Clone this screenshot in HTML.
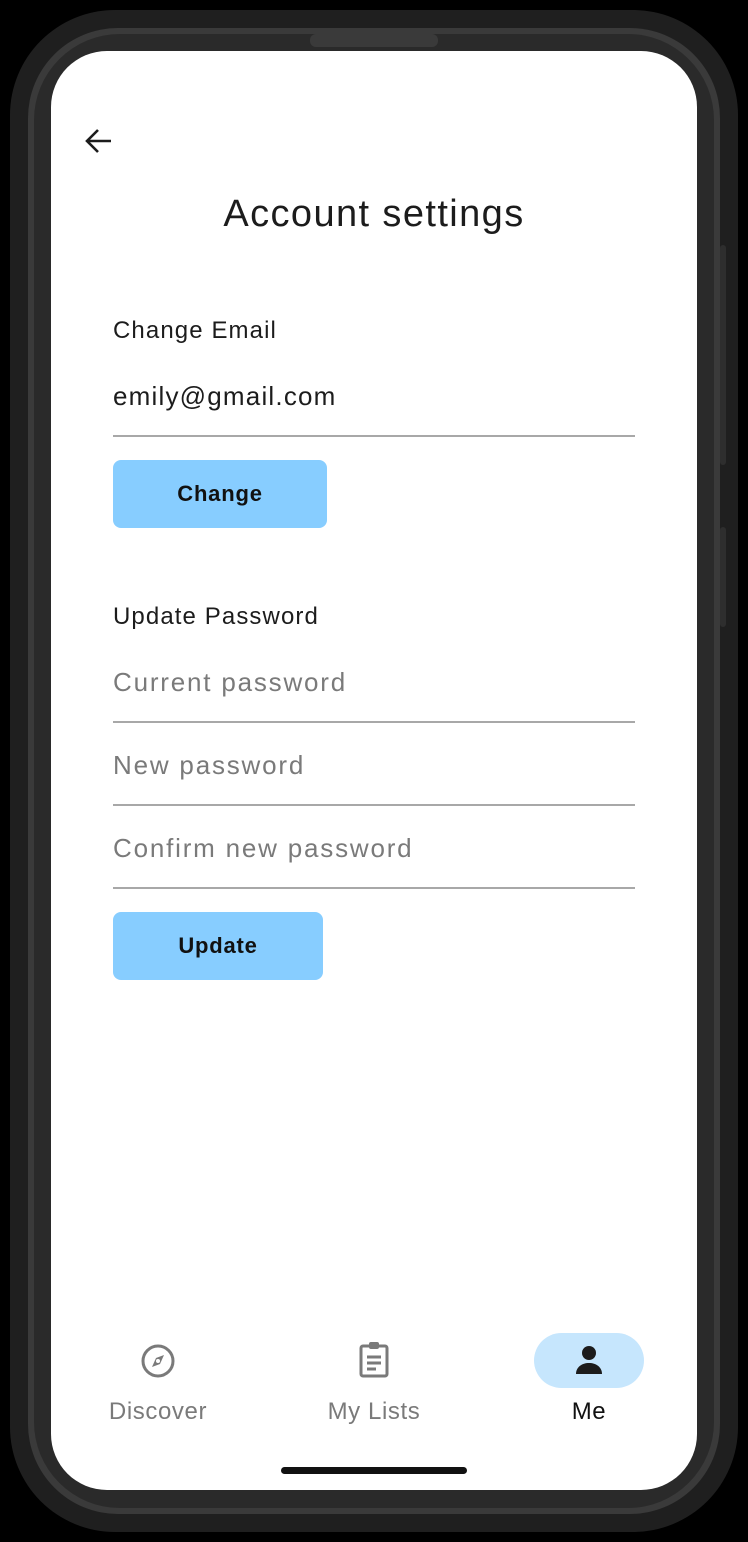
<!DOCTYPE html>
<html><head><meta charset="utf-8"><style>
*{margin:0;padding:0;box-sizing:border-box}
body{width:748px;height:1542px;background:#000;position:relative;overflow:hidden;font-family:"Liberation Sans",sans-serif}
.body{position:absolute;left:10px;top:10px;width:728px;height:1522px;border-radius:105px;background:#1f1f1f}
.ring{position:absolute;left:28px;top:28px;width:692px;height:1486px;border-radius:90px;background:#3a3a3a}
.ring2{position:absolute;left:34px;top:34px;width:680px;height:1474px;border-radius:86px;background:#2a2a2a}
.spk{position:absolute;left:310px;top:34px;width:128px;height:13px;border-radius:6px;background:#3a3a3a}
.btn-side{position:absolute;right:22px;width:6px;background:#2e2e2e;border-radius:3px}
.screen{position:absolute;left:51px;top:51px;width:646px;height:1439px;border-radius:56px;background:#fff;overflow:hidden}
.t{position:absolute;color:#1c1c1c;white-space:nowrap}
.lbl{font-size:24px;letter-spacing:1.1px}
.line{position:absolute;left:62px;width:522px;height:2px;background:#a8a8a8}
.b{position:absolute;left:62px;height:68px;border-radius:8px;background:#87cdff;font-weight:bold;font-size:22px;letter-spacing:0.8px;color:#111;text-align:center;line-height:68px}
.ph{color:#7a7a7a;font-size:26px;letter-spacing:1.8px}
.nav{position:absolute;font-size:24px;letter-spacing:0.6px;color:#7a7a7a;text-align:center;width:160px}
</style></head><body>
<div class="body"></div>
<div class="ring"></div>
<div class="ring2"></div>
<div class="spk"></div>
<div class="btn-side" style="top:245px;height:220px"></div>
<div class="btn-side" style="top:527px;height:100px"></div>
<div class="screen">
<svg style="position:absolute;left:32px;top:75px" width="32" height="30" viewBox="0 0 32 30"><path d="M28 15H5M15 4L4 15l11 11" fill="none" stroke="#1c1c1c" stroke-width="2.6"/></svg>
<div class="t" style="left:0;width:646px;text-align:center;top:142px;font-size:38px;letter-spacing:1.4px">Account settings</div>
<div class="t lbl" style="left:62px;top:266px">Change Email</div>
<div class="t" style="left:62px;top:330px;font-size:26px;letter-spacing:1.2px">emily@gmail.com</div>
<div class="line" style="top:384px"></div>
<div class="b" style="top:409px;width:214px">Change</div>
<div class="t lbl" style="left:62px;top:552px">Update Password</div>
<div class="t ph" style="left:62px;top:616px">Current password</div>
<div class="line" style="top:670px"></div>
<div class="t ph" style="left:62px;top:699px">New password</div>
<div class="line" style="top:753px"></div>
<div class="t ph" style="left:62px;top:782px">Confirm new password</div>
<div class="line" style="top:836px"></div>
<div class="b" style="top:861px;width:210px">Update</div>
<svg style="position:absolute;left:89px;top:1292px" width="36" height="36" viewBox="0 0 36 36"><circle cx="18" cy="18" r="15" fill="none" stroke="#7a7a7a" stroke-width="3"/><path d="M24 12l-4 9-8 3 4-9z" fill="#7a7a7a"/><circle cx="18" cy="18" r="2" fill="#fff"/></svg>
<div class="nav" style="left:27px;top:1347px">Discover</div>
<svg style="position:absolute;left:306px;top:1290px" width="34" height="38" viewBox="0 0 34 38"><rect x="4" y="5" width="26" height="30" rx="2" fill="none" stroke="#7a7a7a" stroke-width="3"/><rect x="12" y="1" width="10" height="7" rx="2" fill="#7a7a7a"/><path d="M10 16h14M10 22h14M10 28h9" stroke="#7a7a7a" stroke-width="3"/></svg>
<div class="nav" style="left:243px;top:1347px">My Lists</div>
<div style="position:absolute;left:483px;top:1282px;width:110px;height:55px;border-radius:28px;background:#c6e6fd"></div>
<svg style="position:absolute;left:522px;top:1293px" width="32" height="32" viewBox="0 0 32 32"><circle cx="16" cy="9" r="7" fill="#1c1c1c"/><path d="M3 30c0-7 6-11 13-11s13 4 13 11z" fill="#1c1c1c"/></svg>
<div class="nav" style="left:458px;top:1347px;color:#111">Me</div>
<div style="position:absolute;left:230px;top:1416px;width:186px;height:7px;border-radius:4px;background:#111"></div>
</div>
</body></html>
